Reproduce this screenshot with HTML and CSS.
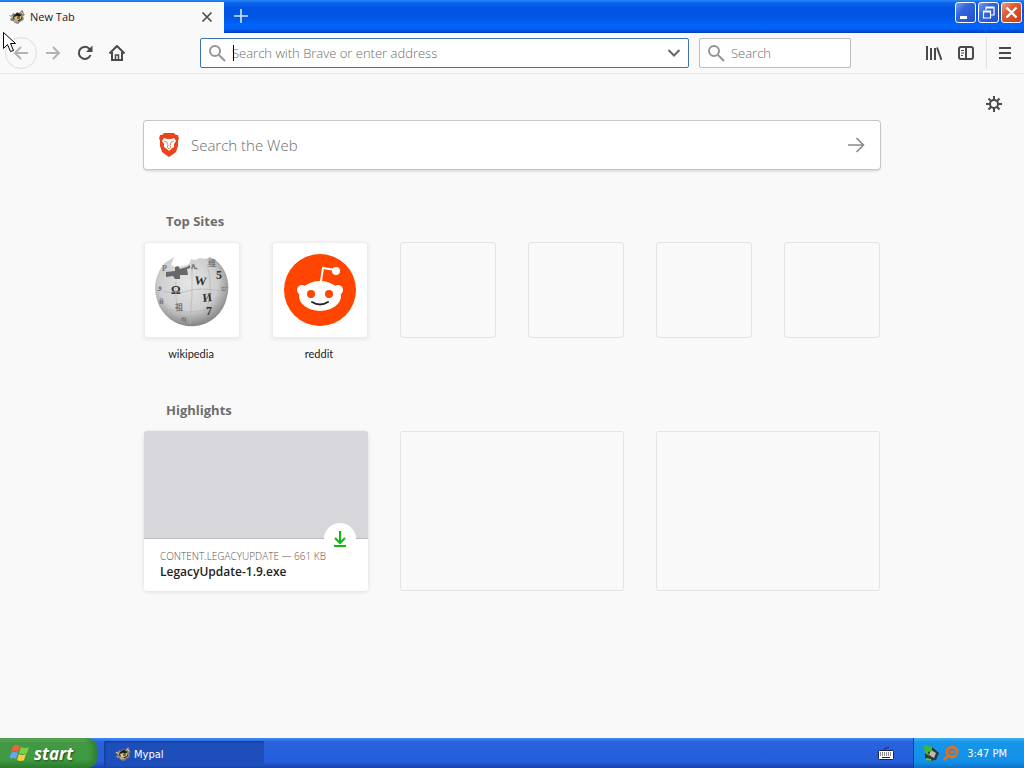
FILE: index.html
```html
<!DOCTYPE html>
<html lang="en">
<head>
    <meta charset="UTF-8">
    <meta name="viewport" content="width=device-width, initial-scale=1.0">
    <title>New Tab</title>
    <link rel="stylesheet" href="styles.css">
</head>
<body>
    <svg class="symbols" aria-hidden="true">
        <symbol id="mypal" viewBox="0 0 16 16">
            <path d="M0 6l3 0 1-2 2 1 2-2 2 1 3-3 1 1 1 3 1 1-2 1 1 3-2 2-2 1-2 2-3-1-2-2-2 0-1-2 2-1z" fill="#8b8676"/>
            <path d="M5 6l4-2 4 2 0 4-3 2-4-1-2-2z" fill="#27231b"/>
            <path d="M5 8l3-1 2 1 3-2-1 4-3 1-3 0z" fill="#d9c47b"/>
            <path d="M1 6l3 2M12 3l2 2M5 12l4 0" stroke="#d8d2bf" fill="none"/>
            <path d="M7 5h3M8 9h3" stroke="#15120e" fill="none"/>
        </symbol>
        <symbol id="magnifier" viewBox="0 0 18 18">
            <circle cx="7" cy="7" r="5" fill="none" stroke="currentColor" stroke-width="2"/>
            <path d="M11 11l6 6" stroke="currentColor" stroke-width="2" fill="none"/>
        </symbol>
    </svg>

    <header class="titlebar">
        <div class="tab">
            <svg class="icon16"><use href="#mypal"/></svg>
            <span class="tab-title">New Tab</span>
            <button class="tab-close" aria-label="Close tab">
                <svg width="12" height="12" viewBox="0 0 12 12"><path d="M1.500 1.500l9 9M10.500 1.500l-9 9" stroke="#4a4a4a" stroke-width="1.600"/></svg>
            </button>
        </div>
        <button class="new-tab" aria-label="New tab">
            <svg width="14" height="14" viewBox="0 0 14 14"><path d="M7 0v14M0 7h14" stroke="#d5e4ff" stroke-width="1.600"/></svg>
        </button>
        <div class="window-buttons">
            <button aria-label="Minimize"><svg viewBox="0 0 19 19"><path d="M4 13h7v3H4z" fill="#fff"/></svg></button>
            <button aria-label="Restore"><svg viewBox="0 0 19 19"><path d="M7 7V4h8v8h-3M7 5h8M4.500 8h7v7h-7zM4 9h8" fill="none" stroke="#fff" stroke-width="1.200"/></svg></button>
            <button class="close" aria-label="Close"><svg viewBox="0 0 19 19"><path d="M4.500 4.500l10 10M14.500 4.500l-10 10" stroke="#fff" stroke-width="2.400"/></svg></button>
        </div>
    </header>

    <nav class="toolbar">
        <button class="tool back" aria-label="Back"><svg width="16" height="16" viewBox="0 0 16 16"><path d="M15 8H2M8 2L2 8l6 6"/></svg></button>
        <button class="tool forward" aria-label="Forward"><svg width="16" height="16" viewBox="0 0 16 16"><path d="M1 8h13M8 2l6 6-6 6"/></svg></button>
        <button class="tool" aria-label="Reload"><svg width="16" height="16" viewBox="0 0 16 16"><path d="M13.500 10A6 6 0 1 1 12 3.500l1 1"/><path d="M15.500 0.500V7H9z" fill="#4a4a4a" stroke="none"/></svg></button>
        <button class="tool" aria-label="Home"><svg width="16" height="16" viewBox="0 0 16 16"><path d="M0.500 8.500L8 1l7.500 7.500M3 7v8h10V7"/><path d="M6.500 15v-5h3v5" stroke-width="1.500"/></svg></button>
        <div class="spacer"></div>
        <div class="field address">
            <svg class="icon18"><use href="#magnifier"/></svg>
            <span class="caret"></span>
            <input type="text" aria-label="Address" placeholder="Search with Brave or enter address">
            <button class="dropdown" aria-label="Show history"><svg width="14" height="14" viewBox="0 0 14 14"><path d="M1.500 4L7 9.500 12.500 4"/></svg></button>
        </div>
        <div class="field search">
            <svg class="icon18"><use href="#magnifier"/></svg>
            <input type="text" aria-label="Search" placeholder="Search">
        </div>
        <div class="spacer"></div>
        <button class="tool" aria-label="Library"><svg width="16" height="16" viewBox="0 0 16 16"><path d="M1 1v14M5 3v12M9 3v12M11 2.500l4.500 12.500"/></svg></button>
        <button class="tool" aria-label="Sidebars"><svg width="16" height="16" viewBox="0 0 16 16"><rect x="1" y="2" width="14" height="12" rx="2"/><path d="M8 2v12"/><path d="M3 5.500h3M3 8h3M3 10.500h2" stroke-width="1"/></svg></button>
        <button class="tool menu" aria-label="Menu"><svg width="14" height="14" viewBox="0 0 14 14"><path d="M1 2h12M1 7h12M1 12h12"/></svg></button>
    </nav>

    <main class="page">
        <button class="settings" aria-label="Customize page">
            <svg width="16" height="16" viewBox="0 0 16 16"><circle cx="8" cy="8" r="4"/><path d="M8 0v4M8 12v4M0 8h4M12 8h4M2.500 2.500l2.500 2.500M11 11l2.500 2.500M13.500 2.500L11 5M5 11l-2.500 2.500"/></svg>
        </button>
        <div class="content">
            <form class="web-search">
                <svg width="22" height="26" viewBox="0 0 22 26">
                    <path d="M6 1h10l2 2 2 0 1 4-1 1 0 6-2 6-4 3-3 2-3-2-4-3-2-6 0-6-1-1 1-4 2 0z" fill="#e8451f"/>
                    <path d="M6 6l3 1h4l3-1 2 3-2 3 0 3-3 2-2 2-2-2-3-2 0-3-2-3z" fill="#fff"/>
                    <path d="M6 9l3 1M16 9l-3 1M9 10l1 4-1 1 2 2 2-2-1-1 1-4" fill="none" stroke="#e88e80"/>
                </svg>
                <input type="text" aria-label="Search the Web" placeholder="Search the Web">
                <button type="button" aria-label="Go"><svg width="18" height="16" viewBox="0 0 18 16"><path d="M1 8h15M9.500 1l7 7-7 7" fill="none" stroke="#8a8a8a" stroke-width="1.600"/></svg></button>
            </form>

            <section class="top-sites">
                <h2>Top Sites</h2>
                <div class="sites">
                    <a class="site" href="#">
                        <span class="tile">
                            <svg width="76" height="76" viewBox="0 0 76 76">
                                <defs>
                                    <radialGradient id="globe" cx="45%" cy="38%" r="62%">
                                        <stop offset="0" stop-color="#e6e6e6"/>
                                        <stop offset=".65" stop-color="#cecece"/>
                                        <stop offset="1" stop-color="#858585"/>
                                    </radialGradient>
                                </defs>
                                <path d="M11 11l9-6-3 8 4 2 8-1 6-2 2-5 4 1 5-2 6 1 4-2 8 5a36 36 0 0 1 9 35 36 36 0 0 1-70 3A37 37 0 0 1 11 11z" fill="url(#globe)"/>
                                <path d="M12 20l9-1 0-4 3-1 2 3 7-2 3-2 0 3-3 1 1 6-8 0 0 4-5 0-2-3-7 1z" fill="#686868"/>
                                <path d="M9 39q12 4 25 0t32 0M17 58q17 5 41-2M22 29q-2 24 6 37M38 15q1 28-2 57M53 12q8 27-3 52" fill="none" stroke="#b5b5b5" stroke-width=".7"/>
                                <g class="globe-letters">
                                    <text x="17" y="42">Ω</text>
                                    <text x="40" y="32" transform="rotate(8 40 32)">W</text>
                                    <text x="49" y="50" transform="rotate(-6 49 50)">И</text>
                                    <text x="52" y="63">7</text>
                                    <text x="62" y="27">5</text>
                                    <text x="37" y="17" class="faint">ጲ</text>
                                    <text x="21" y="58" class="faint">祖</text>
                                    <text x="4" y="37" class="faint">و</text>
                                    <text x="5" y="52" class="faint">й</text>
                                    <text x="54" y="14" class="faint">维</text>
                                    <text x="67" y="39" class="faint">ש</text>
                                    <text x="27" y="71" class="faint">ས</text>
                                    <text x="8" y="19" class="faint">P</text>
                                </g>
                            </svg>
                        </span>
                        <span class="site-name">wikipedia</span>
                    </a>
                    <a class="site" href="#">
                        <span class="tile">
                            <svg width="72" height="72" viewBox="0 0 72 72">
                                <circle cx="36" cy="36" r="36" fill="#ff4500"/>
                                <path d="M37 27l2-13 12 2" fill="none" stroke="#fff" stroke-width="2"/>
                                <circle cx="52" cy="17" r="4" fill="#fff"/>
                                <circle cx="18" cy="36" r="5" fill="#fff"/>
                                <circle cx="54" cy="36" r="5" fill="#fff"/>
                                <ellipse cx="36" cy="42" rx="21" ry="15" fill="#fff"/>
                                <circle cx="27" cy="40" r="4" fill="#ff4500"/>
                                <circle cx="45" cy="40" r="4" fill="#ff4500"/>
                                <path d="M28 48q8 5 16 0" fill="none" stroke="#262626" stroke-width="2" stroke-linecap="round"/>
                            </svg>
                        </span>
                        <span class="site-name">reddit</span>
                    </a>
                    <div class="placeholder"></div>
                    <div class="placeholder"></div>
                    <div class="placeholder"></div>
                    <div class="placeholder"></div>
                </div>
            </section>

            <section class="highlights">
                <h2>Highlights</h2>
                <div class="cards">
                    <a class="card" href="#">
                        <span class="preview"></span>
                        <span class="download">
                            <svg width="16" height="18" viewBox="0 0 16 18"><path d="M8 1v12M3 8l5 5 5-5M2 16h12" fill="none" stroke="#12b812" stroke-width="2"/></svg>
                        </span>
                        <span class="card-text">
                            <span class="card-host">CONTENT.LEGACYUPDATE — 661 KB</span>
                            <span class="card-title">LegacyUpdate-1.9.exe</span>
                        </span>
                    </a>
                    <div class="placeholder"></div>
                    <div class="placeholder"></div>
                </div>
            </section>
        </div>
    </main>

    <footer class="taskbar">
        <button class="start">
            <svg width="20" height="18" viewBox="0 0 20 18">
                <path d="M3 2q4-2 7 0L8 8q-3-2-7 0z" fill="#ee6240"/>
                <path d="M11 3q4 2 8 0l-2 6q-4 2-8 0z" fill="#7fce45"/>
                <path d="M1 9q3-2 7 0l-2 6q-3-2-7 0z" fill="#67a4f5"/>
                <path d="M9 10q3 2 7 0l-2 6q-3 2-7 0z" fill="#f8ce3f"/>
            </svg>
            start
        </button>
        <button class="task"><svg class="icon16"><use href="#mypal"/></svg>Mypal</button>
        <div class="keyboard">
            <svg width="16" height="13" viewBox="0 0 16 13">
                <path d="M6 3q0-2 2-2t3-1" fill="none" stroke="#14296d"/>
                <rect x=".5" y="3.500" width="15" height="9" rx="1" fill="#fff" stroke="#14214d"/>
                <path d="M2 6h12M2 8h12" stroke="#222" stroke-dasharray="1 1"/>
                <path d="M4 10.500h8" stroke="#222"/>
            </svg>
        </div>
        <div class="tray">
            <svg width="17" height="18" viewBox="0 0 17 18">
                <path d="M2 9l7-6 7 6-3 7-7 1-4-3z" fill="#303932"/>
                <path d="M8 6l5 3-2 5-5-3z" fill="#b9bdb5"/>
                <path d="M1 1l8 2 0 4-4 1 1 4-4-3z" fill="#43ba32"/>
                <path d="M3 15l5 1" stroke="#65c54c" stroke-width="2"/>
            </svg>
            <svg width="17" height="18" viewBox="0 0 17 18">
                <circle cx="10" cy="8" r="5" fill="none" stroke="#e0711c" stroke-width="3"/>
                <path d="M7 11l-5 5M8 8h4" fill="none" stroke="#e0711c" stroke-width="3"/>
            </svg>
            <time>3:47 PM</time>
        </div>
    </footer>

    <svg class="pointer" width="13" height="21" viewBox="0 0 13 21" aria-hidden="true">
        <path d="M.5 .5v16l4-4 3 7 3-1-3-7h5z" fill="#fff" stroke="#000"/>
    </svg>
</body>
</html>
```
FILE: styles.css
```css
* {
    box-sizing: border-box;
}
body {
    margin: 0;
    min-height: 100vh;
    display: flex;
    flex-direction: column;
    background: #f9f9f9;
    color: #222;
    font-family: "Open Sans", "Noto Sans", sans-serif;
    font-size: 11px;
}
button, input {
    font: inherit;
    color: inherit;
    border: none;
    background: none;
    padding: 0;
    margin: 0;
    outline: none;
}
button {
    display: flex;
    align-items: center;
    justify-content: center;
}
a {
    color: inherit;
    text-decoration: none;
}
svg {
    display: block;
    flex: none;
}
.symbols {
    position: absolute;
    width: 0;
    height: 0;
}
.icon16 {
    width: 16px;
    height: 16px;
}
.icon18 {
    width: 18px;
    height: 18px;
}

/* title bar */
.titlebar {
    display: flex;
    height: 33px;
    padding-top: 2px;
    background: linear-gradient(#2b8af5 0, #0a63ec 3px, #0054e3 9px, #0054e3 16px, #0063fb 25px, #0060f6 29px, #003bc0 33px);
}
.tab {
    width: 224px;
    display: flex;
    align-items: center;
    padding: 0 9px 2px;
    background: #f9f9f9;
}
.tab-title {
    flex: 1;
    margin-left: 5px;
}
.tab-close {
    width: 16px;
    height: 16px;
}
.new-tab {
    width: 34px;
    height: 28px;
}
.window-buttons {
    display: flex;
    gap: 2px;
    margin: 0 2px 0 auto;
}
.window-buttons button {
    width: 21px;
    height: 21px;
    border: 1px solid #fff;
    border-radius: 3px;
    background: linear-gradient(135deg, #7d9ff0, #3267dd 35%, #1f50cf);
}
.window-buttons .close {
    background: linear-gradient(135deg, #f0997f, #e2582f 40%, #cc3d13);
}

/* toolbar */
.toolbar {
    display: flex;
    align-items: center;
    height: 41px;
    padding: 0 1px 0 5px;
    border-bottom: 1px solid #e6e6e6;
}
.tool {
    width: 32px;
    height: 32px;
}
.tool svg, .dropdown svg, .settings svg {
    fill: none;
    stroke: #4a4a4a;
    stroke-width: 2;
}
.back {
    border: 1px solid #dedede;
    border-radius: 50%;
}
.back svg, .forward svg {
    stroke: #b3b3b3;
}
.menu {
    width: 37px;
    margin-left: 4px;
    border-left: 1px solid #e0e0e0;
}
.spacer {
    flex: 0 1 67px;
}
.field {
    position: relative;
    display: flex;
    align-items: center;
    height: 30px;
    padding: 0 7px;
    background: #fff;
    border: 1px solid #bdbdbd;
    border-radius: 2px;
    color: #949494;
    font-size: 13px;
    font-weight: 300;
}
.field input {
    flex: 1;
    min-width: 0;
    margin-left: 6px;
}
.address {
    flex: 1;
    margin-right: 10px;
    border-color: #3b75b0;
}
.dropdown svg {
    stroke: #666;
}
.search {
    width: 152px;
}
.caret {
    position: absolute;
    left: 32px;
    width: 1px;
    height: 16px;
    background: #000;
}
input::placeholder {
    color: #6c6c6c;
    opacity: 1;
}

/* new tab page */
.page {
    position: relative;
    flex: 1;
    padding: 47px 32px 32px;
}
.settings {
    position: absolute;
    top: 22px;
    right: 22px;
    width: 16px;
    height: 16px;
}
.content {
    max-width: 736px;
    margin: 0 auto;
}
.web-search {
    display: flex;
    align-items: center;
    height: 48px;
    padding: 0 15px 0 14px;
    background: #fff;
    border-radius: 3px;
    box-shadow: 0 0 0 1px #c6c6c6, 0 2px 3px #d0d0d0;
    font-size: 15px;
    font-weight: 300;
}
.web-search input {
    flex: 1;
    min-width: 0;
    margin-left: 11px;
}
h2 {
    margin: 0;
    padding-left: 22px;
    color: #6d6d6d;
    font-size: 13px;
    font-weight: bold;
    line-height: 20px;
}
.top-sites {
    margin-top: 42px;
}
.sites {
    display: grid;
    grid-template-columns: repeat(6, 1fr);
    gap: 32px;
    margin-top: 11px;
}
.site {
    text-align: center;
}
.tile {
    display: flex;
    align-items: center;
    justify-content: center;
    height: 96px;
    background: #fff;
    border: 1px solid #ececec;
    border-radius: 3px;
    box-shadow: 0 1px 4px #e2e2e2;
}
.site-name {
    display: block;
    margin-top: 8px;
    padding-right: 2px;
    font-family: Lato, sans-serif;
    line-height: 16px;
}
.placeholder {
    height: 96px;
    border: 1px solid #e4e4e4;
    border-radius: 3px;
}
.globe-letters {
    fill: #333;
    font-family: "Liberation Serif", "Noto Sans CJK SC", serif;
    font-size: 12px;
    font-weight: bold;
}
.faint {
    fill: #777;
    font-size: 8px;
}
.highlights {
    margin-top: 38px;
}
.cards {
    display: grid;
    grid-template-columns: repeat(3, 1fr);
    gap: 32px;
    margin-top: 11px;
}
.cards .placeholder {
    height: 160px;
}
.card {
    position: relative;
    display: flex;
    flex-direction: column;
    height: 160px;
    background: #fff;
    border-radius: 3px;
    box-shadow: 0 1px 4px #dddddd;
}
.preview {
    height: 108px;
    background: #d7d7db;
    border-bottom: 1px solid #bbbbbf;
    border-radius: 3px 3px 0 0;
}
.download {
    position: absolute;
    top: 92px;
    right: 12px;
    width: 32px;
    height: 32px;
    display: flex;
    align-items: center;
    justify-content: center;
    background: #fff;
    border-radius: 50%;
}
.card-text {
    display: flex;
    flex-direction: column;
    padding: 9px 16px;
    line-height: 16px;
}
.card-host {
    color: #555;
    font-size: 10px;
    font-weight: 300;
}
.card-title {
    font-size: 12px;
    font-weight: 600;
}

/* taskbar */
.taskbar {
    display: flex;
    align-items: stretch;
    height: 30px;
    color: #fff;
    background: linear-gradient(#3f8cf3 0, #2a62dc 4px, #245edb 24px, #1941a5 30px);
    font-family: "DejaVu Sans Condensed", "DejaVu Sans", sans-serif;
}
.start {
    width: 97px;
    justify-content: flex-start;
    gap: 4px;
    padding-left: 10px;
    border-radius: 0 10px 10px 0;
    background: linear-gradient(#6cb765 0, #449844 5px, #3f9a3f 22px, #2b7a2d 30px);
    box-shadow: inset -4px 0 5px #2f8030;
    font-family: "Open Sans", sans-serif;
    font-size: 17px;
    font-style: italic;
    font-weight: bold;
    text-shadow: 1px 1px 2px #1b4f1c;
}
.task {
    width: 160px;
    height: 26px;
    justify-content: flex-start;
    gap: 3px;
    margin: 3px 0 0 7px;
    padding-left: 11px;
    border-radius: 2px;
    background: #1e4eb9;
    box-shadow: inset 1px 1px 2px #143a93;
}
.keyboard {
    display: flex;
    align-items: center;
    margin: 0 19px 0 auto;
}
.tray {
    display: flex;
    align-items: center;
    gap: 2px;
    padding: 0 17px 0 9px;
    border-left: 1px solid #103f9d;
    background: linear-gradient(#3eb1f5 0, #1795e8 4px, #1290e9 24px, #0f6fc4 30px);
}
.tray time {
    margin-left: 6px;
}

/* mouse pointer */
.pointer {
    position: absolute;
    top: 32px;
    left: 3px;
}
```
